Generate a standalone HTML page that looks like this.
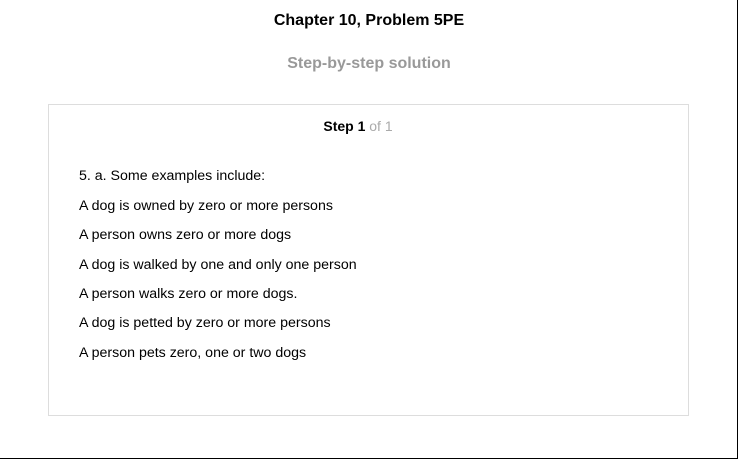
<!DOCTYPE html>
<html><head><style>
body{margin:0;width:738px;height:459px;position:relative;background:#fff;font-family:"Liberation Sans",Arial,sans-serif;overflow:hidden}
.frame{position:absolute;left:0;top:0;width:737px;height:458px;border-right:1px solid #000;border-bottom:1px solid #000}
.t{position:absolute;left:0;width:738px;text-align:center;font-weight:bold}
.box{position:absolute;left:48px;top:104px;width:639px;height:310px;border:1px solid #ddd}
.p{position:absolute;left:79px;font-size:14.2px;color:#000}
</style></head><body>
<div class="frame"></div>
<div class="t" style="top:12px;font-size:16px;color:#000">Chapter 10, Problem 5PE</div>
<div class="t" style="top:55px;font-size:16px;color:#999">Step-by-step solution</div>
<div class="box"></div>
<div class="t" style="top:118px;left:-11px;font-size:14px;color:#000">Step 1 <span style="font-weight:normal;color:#aaa">of 1</span></div>
<div class="p" style="top:168px">5. a. Some examples include:</div>
<div class="p" style="top:198px">A dog is owned by zero or more persons</div>
<div class="p" style="top:227px">A person owns zero or more dogs</div>
<div class="p" style="top:257px">A dog is walked by one and only one person</div>
<div class="p" style="top:286px">A person walks zero or more dogs.</div>
<div class="p" style="top:315px">A dog is petted by zero or more persons</div>
<div class="p" style="top:345px">A person pets zero, one or two dogs</div>
</body></html>
